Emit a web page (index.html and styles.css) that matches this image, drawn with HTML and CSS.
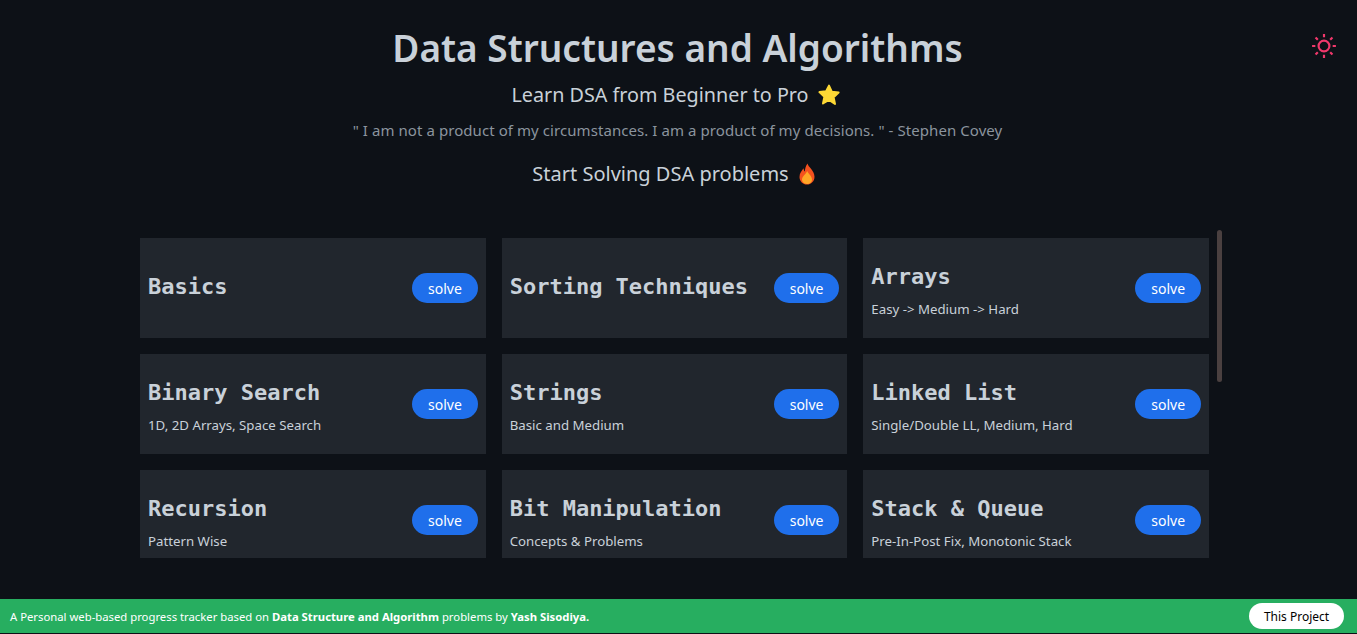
FILE: index.html
```html
<!DOCTYPE html>
<html lang="en">
<head>
<meta charset="utf-8">
<title>Data Structures and Algorithms</title>
<link rel="stylesheet" href="styles.css">
</head>
<body>
<button class="theme" aria-label="Toggle theme">
<svg viewBox="0 0 24 24" width="26" height="26" fill="none" stroke="currentColor" stroke-width="2" stroke-linecap="butt"><circle cx="12" cy="12" r="5"/><path d="M12 1v3M12 20v3M1 12h3M20 12h3M4.200 4.200l2.100 2.100M17.700 17.700l2.100 2.100M4.200 19.800l2.100-2.100M17.700 6.300l2.100-2.100"/></svg>
</button>
<header class="head">
<h1 class="title">Data Structures and Algorithms</h1>
<h2 class="sub">Learn DSA from Beginner to Pro <svg class="emoji" viewBox="0 0 24 24" width="24" height="24"><path fill="#fdd835" stroke="#fdd835" stroke-width="2" stroke-linejoin="round" d="M12 2.600l2.900 6.200 6.700.8-5 4.600 1.400 6.700L12 17l-6 3.400 1.400-6.700-5-4.600 6.700-.8z"/></svg></h2>
<p class="quote">" I am not a product of my circumstances. I am a product of my decisions. " - Stephen Covey</p>
<h3 class="start">Start Solving DSA problems <svg class="emoji" viewBox="0 0 24 24" width="24" height="24"><path fill="#f4511e" d="M12.500 1.500c.6 3.600 7 7 7 13.200 0 4.600-3.500 7.800-7.500 7.800s-7.500-3.200-7.500-7.600c0-3.600 2.200-6 4-8.600.3 1.600.6 2.500 1.500 3.200C9.800 7.400 10.600 4 12.500 1.500z"/><path fill="#ffa726" d="M12.300 9c.4 2.400 4.700 4.700 4.700 8.500 0 2.900-2.300 4.500-5 4.500s-5-1.800-5-4.400c0-3.200 4-5.600 5.300-8.600z"/></svg></h3>
</header>
<div class="panel">
<main class="scroller">
<div class="grid">
<article class="card"><div class="info"><h4>Basics</h4></div><a class="solve">solve</a></article>
<article class="card"><div class="info"><h4>Sorting Techniques</h4></div><a class="solve">solve</a></article>
<article class="card"><div class="info"><h4>Arrays</h4><p>Easy -&gt; Medium -&gt; Hard</p></div><a class="solve">solve</a></article>
<article class="card"><div class="info"><h4>Binary Search</h4><p>1D, 2D Arrays, Space Search</p></div><a class="solve">solve</a></article>
<article class="card"><div class="info"><h4>Strings</h4><p>Basic and Medium</p></div><a class="solve">solve</a></article>
<article class="card"><div class="info"><h4>Linked List</h4><p>Single/Double LL, Medium, Hard</p></div><a class="solve">solve</a></article>
<article class="card"><div class="info"><h4>Recursion</h4><p>Pattern Wise</p></div><a class="solve">solve</a></article>
<article class="card"><div class="info"><h4>Bit Manipulation</h4><p>Concepts &amp; Problems</p></div><a class="solve">solve</a></article>
<article class="card"><div class="info"><h4>Stack &amp; Queue</h4><p>Pre-In-Post Fix, Monotonic Stack</p></div><a class="solve">solve</a></article>
<article class="card"><div class="info"><h4>Sliding Window</h4><p>Two Pointers</p></div><a class="solve">solve</a></article>
<article class="card"><div class="info"><h4>Heaps</h4><p>Medium, Hard</p></div><a class="solve">solve</a></article>
<article class="card"><div class="info"><h4>Greedy</h4><p>Easy, Medium, Hard</p></div><a class="solve">solve</a></article>
<article class="card"><div class="info"><h4>Binary Trees</h4><p>Traversals, Medium, Hard</p></div><a class="solve">solve</a></article>
<article class="card"><div class="info"><h4>Binary Search Trees</h4><p>Concepts &amp; Problems</p></div><a class="solve">solve</a></article>
<article class="card"><div class="info"><h4>Graphs</h4><p>BFS, DFS, Shortest Path</p></div><a class="solve">solve</a></article>
<article class="card"><div class="info"><h4>Dynamic Programming</h4><p>Patterns &amp; Problems</p></div><a class="solve">solve</a></article>
<article class="card"><div class="info"><h4>Tries</h4><p>Theory &amp; Problems</p></div><a class="solve">solve</a></article>
<article class="card"><div class="info"><h4>Maths</h4><p>Basics &amp; Problems</p></div><a class="solve">solve</a></article>
</div>
</main>
<div class="thumb"></div>
</div>
<footer class="foot">
<p>A Personal web-based progress tracker based on <b>Data Structure and Algorithm</b> problems by <b>Yash Sisodiya.</b></p>
<a class="project">This Project</a>
</footer>
</body>
</html>
```
FILE: styles.css
```css
* { box-sizing: border-box; }
html, body { height: 100%; }
body {
  margin: 0;
  background: #0d1117;
  color: #c9d1d9;
  font-family: "Noto Sans", "Open Sans", sans-serif;
  overflow: hidden;
  display: flex;
  flex-direction: column;
}
.theme {
  position: absolute;
  top: 33px;
  right: 20px;
  padding: 0;
  background: none;
  border: 0;
  color: #f0386b;
  line-height: 0;
}
.head {
  height: 230px;
  flex: none;
  display: flex;
  flex-direction: column;
  align-items: center;
  padding-top: 24px;
}
.title { margin: 0 2px 0 0; font-size: 37px; line-height: 48px; font-weight: 600; }
.sub { margin: 8px 0 0; font-size: 19.75px; line-height: 30px; font-weight: 400; display: flex; align-items: center; gap: 8px; }
.sub .emoji { margin-right: 5px; }
.quote { margin: 8px 2px 0 0; font-size: 15px; line-height: 24px; letter-spacing: 0.07px; color: #8b949e; }
.start { margin: 17px 0 0; font-size: 20px; line-height: 30px; font-weight: 400; display: flex; align-items: center; gap: 6px; }
.start .emoji { margin-right: 6px; }
.emoji { display: block; }
.panel {
  position: relative;
  width: 1090px;
  margin-left: 132px;
  height: 328px;
  flex: none;
}
.scroller {
  height: 100%;
  overflow-y: scroll;
  scrollbar-width: none;
  padding: 8px 13px 16px 8px;
}
.thumb {
  position: absolute;
  top: 0;
  right: 0;
  width: 5px;
  height: 152px;
  border-radius: 5px;
  background: #4a4040;
}
.grid {
  display: grid;
  grid-template-columns: repeat(3, 1fr);
  gap: 16px;
}
.card {
  height: 100px;
  background: #21262d;
  padding: 0 8px;
  display: flex;
  align-items: center;
  justify-content: space-between;
}
.info h4 {
  margin: 0;
  padding-bottom: 2px;
  font-family: "DejaVu Sans Mono", monospace;
  font-size: 22px;
  line-height: 30px;
  font-weight: 700;
}
.info p { margin: 10px 0 0; font-size: 13.25px; line-height: 11px; }
.solve {
  width: 65.5px;
  height: 30px;
  border-radius: 15px;
  background: #1f6feb;
  color: #fff;
  font-size: 14px;
  display: flex;
  align-items: center;
  justify-content: center;
}
.foot {
  position: absolute;
  left: 0;
  right: 0;
  bottom: 1px;
  height: 34px;
  background: #27ae60;
  color: #fff;
  padding: 0 13px 0 10px;
  display: flex;
  align-items: center;
  justify-content: space-between;
}
.foot p { margin: 0; font-size: 11.3px; }
.project {
  width: 95px;
  height: 26px;
  border-radius: 13px;
  background: #fff;
  color: #000;
  font-size: 12px;
  display: flex;
  align-items: center;
  justify-content: center;
}
```
